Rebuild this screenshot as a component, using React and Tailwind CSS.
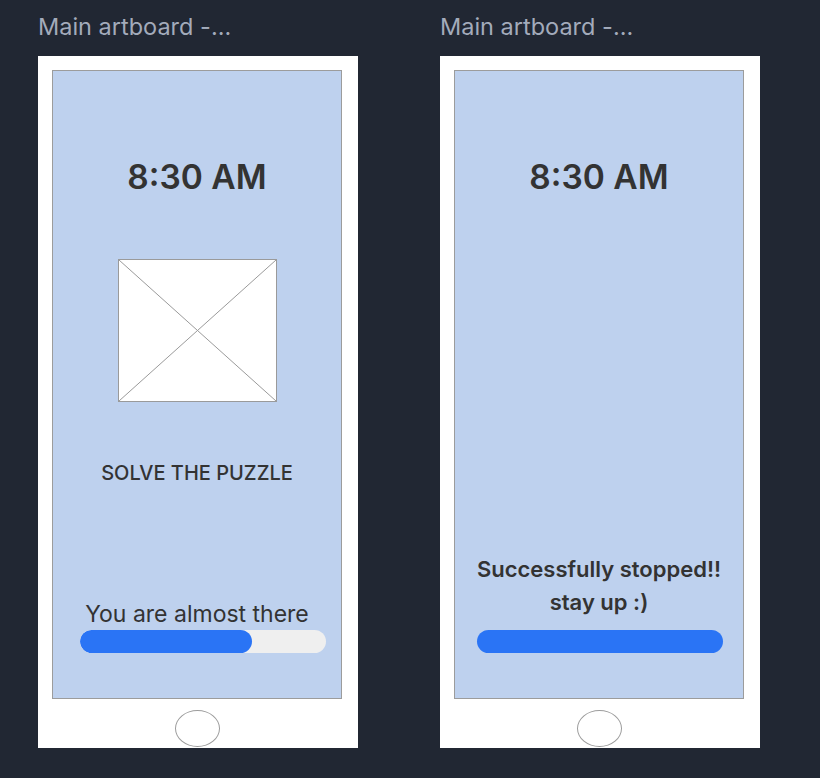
import React from "react";

const font = { fontFamily: "Inter, 'Noto Sans', sans-serif" };

const Placeholder = () => (
  <div className="mx-auto mt-[60px] h-[143px] w-[159px] border border-[#9a9a9a] bg-white">
    <svg className="h-full w-full" viewBox="0 0 157 141" preserveAspectRatio="none">
      <line x1="0" y1="0" x2="157" y2="141" stroke="#9a9a9a" strokeWidth="1" />
      <line x1="157" y1="0" x2="0" y2="141" stroke="#9a9a9a" strokeWidth="1" />
    </svg>
  </div>
);

const Artboard = ({ children }) => (
  <div className="flex flex-col">
    <div className="h-[56px] pt-[12px] text-[23.5px] leading-[30px] text-[#a3abbb]">Main artboard -...</div>
    <div className="flex h-[692px] w-[320px] flex-col bg-white pl-[14px] pr-[16px] pt-[14px]">
      <div className="flex h-[629px] w-[290px] flex-col border border-[#9c9c9c] bg-[#bed1ee] text-[#333333]">
        {children}
      </div>
      <div className="mx-auto mt-[11px] h-[37px] w-[45px] rounded-[50%] border border-[#9c9c9c]" />
    </div>
  </div>
);

const Clock = () => (
  <div className="mt-[84px] text-center text-[33.5px] font-semibold leading-[44px]">8:30 AM</div>
);

export default function App() {
  return (
    <div className="flex min-h-[778px] w-[820px] gap-[82px] bg-[#212733] pl-[38px]" style={font}>
      <Artboard>
        <Clock />
        <Placeholder />
        <div className="mt-[59px] text-center text-[20px] font-medium leading-[24px]">SOLVE THE PUZZLE</div>
        <div className="mt-[115px] text-center text-[23px] leading-[28px]">You are almost there</div>
        <div className="ml-[27px] mt-[2px] h-[23px] w-[246px] overflow-hidden rounded-full bg-[#efefef]">
          <div className="h-full w-[172px] rounded-full bg-[#2a74f5]" />
        </div>
      </Artboard>
      <Artboard>
        <Clock />
        <div className="mt-[354px] text-center text-[22px] font-semibold leading-[33px]">
          Successfully stopped!!
          <br />
          stay up :)
        </div>
        <div className="ml-[22px] mt-[11px] h-[23px] w-[246px] rounded-full bg-[#2a74f5]" />
      </Artboard>
    </div>
  );
}
